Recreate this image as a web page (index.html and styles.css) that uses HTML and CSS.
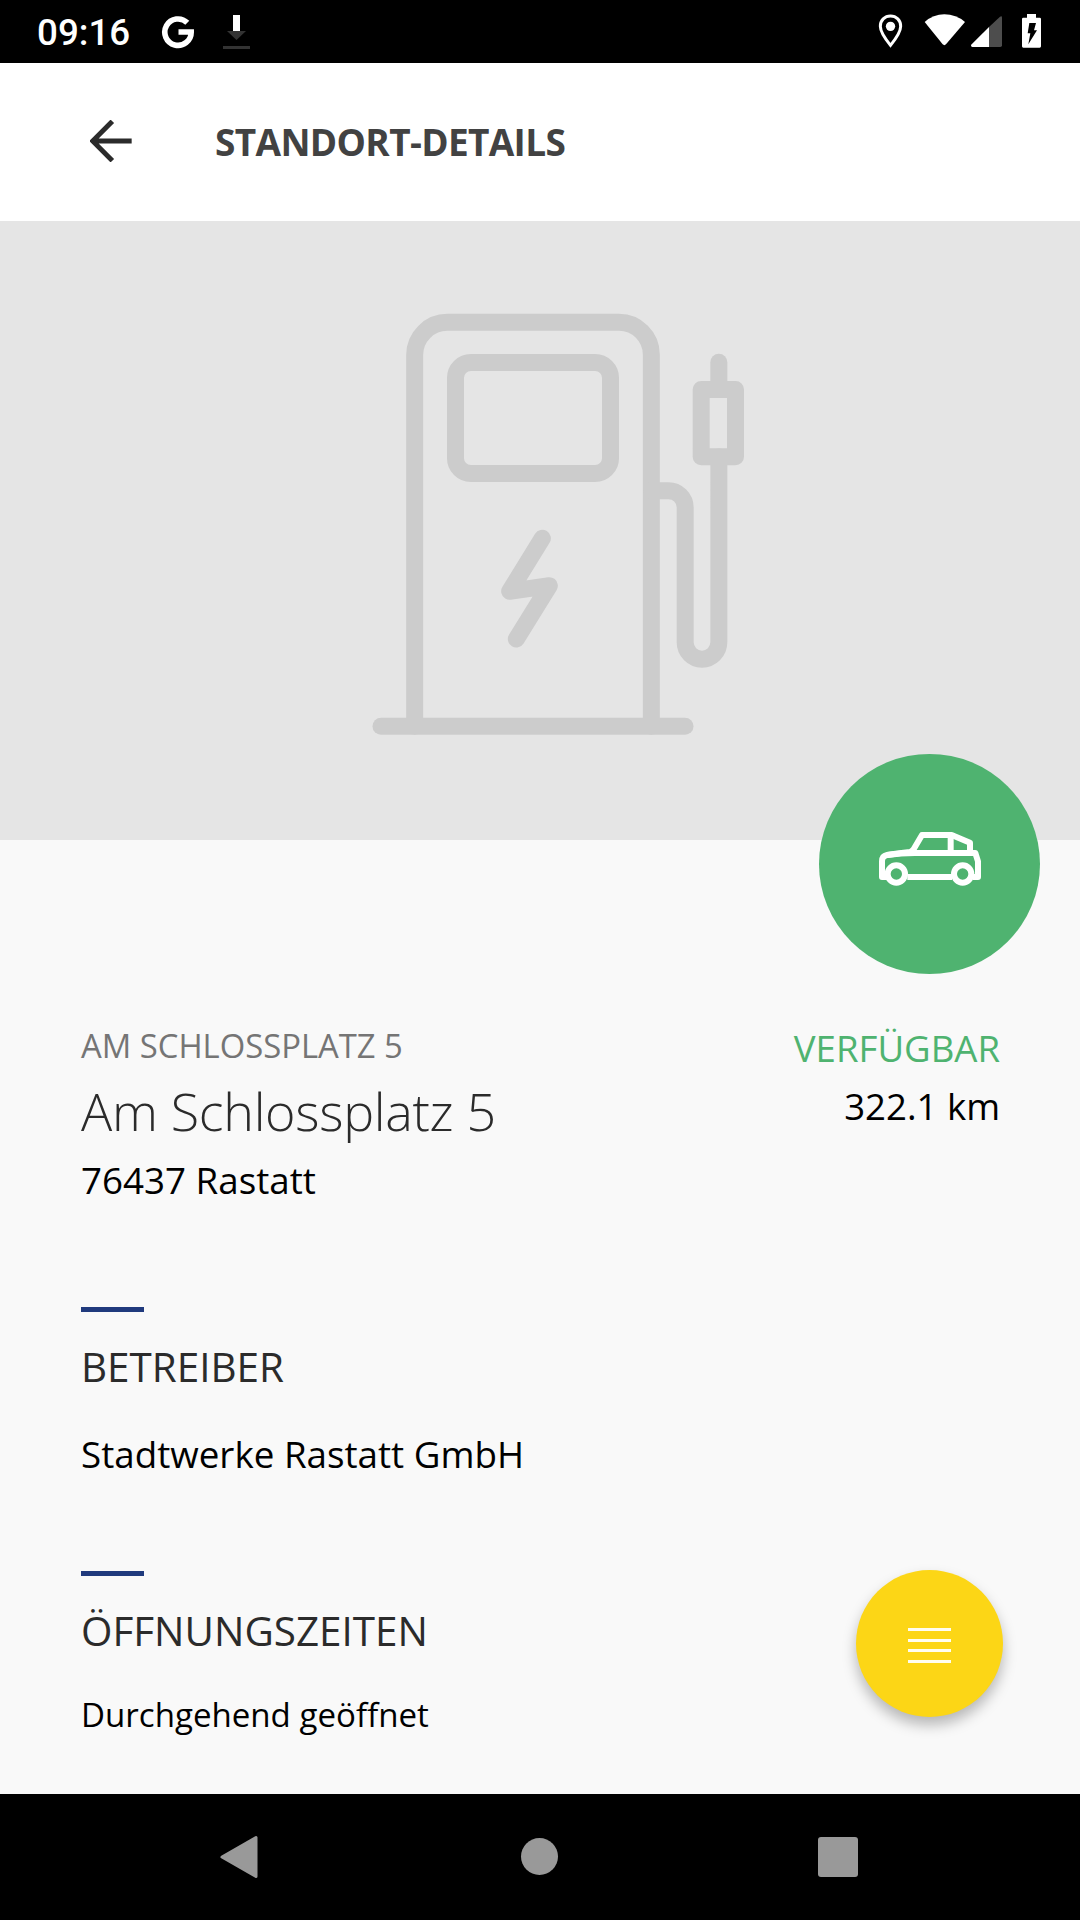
FILE: index.html
```
<!DOCTYPE html>
<html lang="de">
<head>
  <meta charset="UTF-8">
  <title>Standort-Details</title>
  <link rel="stylesheet" href="styles.css">
</head>
<body>
  <div class="status-bar">
    <span class="clock">09:16</span>
    <svg class="icon-google" width="34" height="34" viewBox="0 0 34 34">
      <path d="M26.3 7.8A13.2 13.2 0 1 0 30.2 17H17.5" fill="none" stroke="#fff" stroke-width="5.6"/>
    </svg>
    <svg class="icon-download" width="27" height="34" viewBox="0 0 27 34">
      <rect x="10" y="0" width="7" height="16" fill="#fff"/>
      <path d="M4 16h19l-9.500 9z" fill="#333"/>
      <rect x="0" y="31" width="27" height="3" fill="#333"/>
    </svg>
    <div class="status-icons">
      <svg width="27" height="63" viewBox="111 0 81 189">
        <path d="M151.500 48C134 48 121 61 121 79C121 99 151.500 136 151.500 136C151.500 136 182 99 182 79C182 61 169 48 151.500 48Z" fill="none" stroke="#fff" stroke-width="9"/>
        <circle cx="151.500" cy="79" r="14" fill="#fff"/>
      </svg>
      <svg class="wifi" width="44" height="63" viewBox="249 0 132 189">
        <path d="M254 66Q280 43 313 43Q348 43 375 66L318 133Q313 138 308 133Z" fill="#fff"/>
      </svg>
      <svg class="signal" width="33" height="63" viewBox="390 0 99 189">
        <path d="M447 81L480 50Q486 46 486 53V136Q486 141 481 141H447Z" fill="#4d4d4d"/>
        <path d="M447 81V141H397Q390 139 395 133Z" fill="#fff"/>
      </svg>
      <svg class="battery" width="21" height="63" viewBox="543 0 63 189">
        <path d="M561 42H588V53H599Q603 53 603 57V139Q603 143 599 143H550Q546 143 546 139V57Q546 53 550 53H561Z" fill="#fff"/>
        <path d="M568 69H588L582 91H591L565 133L571 100H563Z" fill="#000"/>
      </svg>
    </div>
  </div>

  <header>
    <svg class="back" width="42" height="42" viewBox="0 0 126 126">
      <path d="M125 63H12M67 4L8 63L67 122" fill="none" stroke="#2b2b2b" stroke-width="15"/>
    </svg>
    <h1>STANDORT-DETAILS</h1>
  </header>

  <section class="hero">
    <!-- Ladesäule -->
    <svg width="400" height="450" viewBox="0 0 1200 1350" fill="none" stroke="#ccc" stroke-width="51" stroke-linecap="round" stroke-linejoin="round">
      <path d="M164 1279V165A98 98 0 0 1 262 67H777A97 97 0 0 1 874 164V1279"/>
      <path d="M63 1279H975"/>
      <rect x="286.500" y="187.500" width="465" height="333" rx="46"/>
      <path d="M547 715L449 874L568 857L469 1017"/>
      <path d="M876 572H925A50 50 0 0 1 975.500 622V1027A50.500 50.500 0 0 0 1076.500 1027V471"/>
      <path d="M1076.500 268V187"/>
      <rect x="1023.500" y="268.500" width="103" height="202"/>
    </svg>
    <div class="badge">
      <svg width="104" height="56" viewBox="234 273 312 168" fill="none" stroke="#fff" stroke-width="18" stroke-linejoin="round">
        <path d="M262 411H246V364Q246 348 261 345Q290 340 330 336Q336 334 340 329L366 285H455L510 308V339"/>
        <path d="M262 345Q300 339 345 339H526L534 364V411H518"/>
        <path d="M452 287V338M322 411H456"/>
        <circle cx="289" cy="402" r="26"/>
        <circle cx="488" cy="402" r="26"/>
      </svg>
    </div>
  </section>

  <main>
    <div class="location">
      <div class="address">
        <p class="name">AM SCHLOSSPLATZ 5</p>
        <h2>Am Schlossplatz 5</h2>
        <p class="city">76437 Rastatt</p>
      </div>
      <div class="availability">
        <p class="status">VERFÜGBAR</p>
        <p class="distance">322.1 km</p>
      </div>
    </div>

    <section class="info operator">
      <h3>BETREIBER</h3>
      <p>Stadtwerke Rastatt GmbH</p>
    </section>

    <section class="info hours">
      <h3>ÖFFNUNGSZEITEN</h3>
      <p>Durchgehend geöffnet</p>
    </section>
  </main>

  <div class="fab">
    <svg width="43" height="37" viewBox="0 0 43 37" stroke="#fffdf0" stroke-width="3">
      <path d="M0 2.500H43M0 13.500H43M0 23.500H43M0 34.500H43"/>
    </svg>
  </div>

  <nav>
    <svg width="38" height="44" viewBox="0 0 38 44">
      <path d="M2 22L36 2.500V41.500Z" fill="#999" stroke="#999" stroke-width="3" stroke-linejoin="round"/>
    </svg>
    <div class="home"></div>
    <div class="recent"></div>
  </nav>
</body>
</html>
```

FILE: styles.css
```
* {
  box-sizing: border-box;
  margin: 0;
  padding: 0;
}

body {
  position: relative;
  display: flex;
  flex-direction: column;
  width: 1080px;
  height: 1920px;
  overflow: hidden;
  background-color: #f9f9f9;
  color: #000;
  font-family: 'Open Sans', sans-serif;
}

svg {
  display: block;
  flex-shrink: 0;
}

/* Statusleiste */
.status-bar {
  display: flex;
  align-items: center;
  height: 63px;
  padding: 0 38px 0 37px;
  background-color: #000;
  color: #fff;
}

.clock {
  width: 94px;
  font-family: Roboto, sans-serif;
  font-size: 36.75px;
  font-weight: 500;
  line-height: 42px;
  padding-top: 3px;
}

.icon-google {
  margin-left: 30px;
}

.icon-download {
  margin-left: 28px;
}

.status-icons {
  display: flex;
  margin-left: auto;
}

.wifi {
  margin-left: 19px;
}

.signal {
  margin-left: 3px;
}

.battery {
  margin-left: 18px;
}

header {
  display: flex;
  align-items: center;
  height: 158px;
  padding: 0 0 2px 90px;
  background-color: #fff;
}

header h1 {
  margin-left: 83px;
  color: #424242;
  font-size: 37px;
  font-weight: 700;
  letter-spacing: -0.65px;
  line-height: 51px;
}

.hero {
  position: relative;
  height: 619px;
  padding: 79px 0 0 360px;
  background-color: #e5e5e5;
}

.badge {
  position: absolute;
  right: 40px;
  bottom: -134px;
  display: flex;
  justify-content: center;
  align-items: center;
  width: 221px;
  height: 220px;
  padding-bottom: 10px;
  border-radius: 50%;
  background-color: #4fb370;
}

main {
  flex: 1;
  padding: 183px 80px 0 81px;
}

.location {
  display: flex;
  justify-content: space-between;
}

.name {
  color: #757575;
  font-size: 32.8px;
  line-height: 45px;
}

h2 {
  margin-top: 7px;
  color: #2b2b2b;
  font-size: 52px;
  font-weight: 300;
  letter-spacing: -0.3px;
  line-height: 72px;
}

.city {
  margin-top: 9px;
  font-size: 36.75px;
  line-height: 49px;
}

.availability {
  padding-top: 1px;
  text-align: right;
  font-size: 36.6px;
  line-height: 49px;
}

.status {
  color: #4fb370;
}

.distance {
  margin-top: 9px;
}

.info::before {
  content: '';
  display: block;
  width: 63px;
  height: 5px;
  background-color: #203a7d;
}

.operator {
  margin-top: 102px;
}

.hours {
  margin-top: 92px;
}

h3 {
  margin-top: 28px;
  color: #2b2b2b;
  font-size: 40.4px;
  font-weight: 400;
  line-height: 54px;
}

.operator p {
  margin-top: 36px;
  font-size: 36.75px;
  line-height: 49px;
}

.hours p {
  margin-top: 34px;
  font-size: 33.1px;
  line-height: 45px;
}

.fab {
  position: absolute;
  top: 1570px;
  left: 856px;
  display: flex;
  justify-content: center;
  align-items: center;
  width: 147px;
  height: 147px;
  padding-top: 4px;
  border-radius: 50%;
  background-color: #fcd616;
  box-shadow: 0 8px 14px rgba(0, 0, 0, 0.27);
}

/* Navigationsleiste */
nav {
  display: flex;
  align-items: center;
  height: 126px;
  padding: 0 0 1px 220px;
  background-color: #000;
}

.home {
  width: 37px;
  height: 37px;
  margin-left: 263px;
  border-radius: 50%;
  background-color: #999;
}

.recent {
  width: 40px;
  height: 40px;
  margin-left: 260px;
  border-radius: 3px;
  background-color: #999;
}
```
